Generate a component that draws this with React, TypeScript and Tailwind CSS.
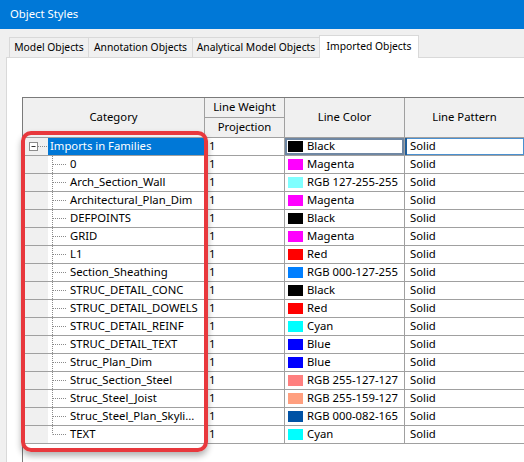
import React from 'react';

type Row = { name: string; color: string; swatch: string };

const ROWS: Row[] = [
  { name: 'Imports in Families', color: 'Black', swatch: '#000000' },
  { name: '0', color: 'Magenta', swatch: '#ff00ff' },
  { name: 'Arch_Section_Wall', color: 'RGB 127-255-255', swatch: '#7fffff' },
  { name: 'Architectural_Plan_Dim', color: 'Magenta', swatch: '#ff00ff' },
  { name: 'DEFPOINTS', color: 'Black', swatch: '#000000' },
  { name: 'GRID', color: 'Magenta', swatch: '#ff00ff' },
  { name: 'L1', color: 'Red', swatch: '#ff0000' },
  { name: 'Section_Sheathing', color: 'RGB 000-127-255', swatch: '#007fff' },
  { name: 'STRUC_DETAIL_CONC', color: 'Black', swatch: '#000000' },
  { name: 'STRUC_DETAIL_DOWELS', color: 'Red', swatch: '#ff0000' },
  { name: 'STRUC_DETAIL_REINF', color: 'Cyan', swatch: '#00ffff' },
  { name: 'STRUC_DETAIL_TEXT', color: 'Blue', swatch: '#0000ff' },
  { name: 'Struc_Plan_Dim', color: 'Blue', swatch: '#0000ff' },
  { name: 'Struc_Section_Steel', color: 'RGB 255-127-127', swatch: '#ff7f7f' },
  { name: 'Struc_Steel_Joist', color: 'RGB 255-159-127', swatch: '#ff9f7f' },
  { name: 'Struc_Steel_Plan_Skyli...', color: 'RGB 000-082-165', swatch: '#0052a5' },
  { name: 'TEXT', color: 'Cyan', swatch: '#00ffff' },
];

const TABS = [
  { label: 'Model Objects', w: 'w-[80px]' },
  { label: 'Annotation Objects', w: 'w-[105px]' },
  { label: 'Analytical Model Objects', w: 'w-[128px]' },
];

function TreeLines({ last }: { last: boolean }) {
  return (
    <svg width="20" height="17" className="shrink-0">
      <line x1="4.5" y1="0" x2="4.5" y2={last ? 8.5 : 17} stroke="#8a8a8a" strokeDasharray="1 1" />
      <line x1="5" y1="8.5" x2="19" y2="8.5" stroke="#8a8a8a" strokeDasharray="1 1" />
    </svg>
  );
}

function MinusBox() {
  return (
    <svg width="25" height="17">
      <rect x="6.5" y="4.5" width="8" height="8" fill="#ffffff" stroke="#8c8c8c" />
      <line x1="8.5" y1="8.5" x2="12.5" y2="8.5" stroke="#333333" />
      <line x1="15" y1="8.5" x2="25" y2="8.5" stroke="#8a8a8a" strokeDasharray="1 1" />
    </svg>
  );
}

export default function App() {
  return (
    <div className="relative w-[524px] h-[462px] overflow-hidden flex flex-col bg-[#f0f0f0] text-[11.3px] text-black font-['Segoe_UI','Noto_Sans',sans-serif]">
      {/* Title bar */}
      <div className="h-[29px] shrink-0 bg-[#0078d7] flex items-center pl-[10px] text-white">
        Object Styles
      </div>

      {/* Tabs */}
      <div className="h-[28px] shrink-0 flex items-end pl-[9px] whitespace-nowrap text-[10.3px]">
        {TABS.map((t) => (
          <div
            key={t.label}
            className={`${t.w} h-[20px] -mr-px flex items-center justify-center border border-b-0 border-[#d9d9d9] bg-[#f0f0f0] leading-none`}
          >
            {t.label}
          </div>
        ))}
        <div className="relative z-10 w-[100px] h-[23px] -mb-px flex items-center justify-center border border-b-0 border-[#d9d9d9] bg-white leading-none pb-[2px]">
          Imported Objects
        </div>
      </div>

      {/* Panel */}
      <div className="flex-1 ml-[6px] border-l border-t border-[#d9d9d9] bg-white pt-[39px] pl-[15px] flex flex-col">
        <div className="flex-1 border-l border-t border-[#7a7a7a]">
          {/* Header */}
          <div className="grid grid-cols-[182px_80px_120px_120px] grid-rows-[20px_20px] bg-[#f0f0f0]">
            <div className="row-span-2 border-r border-b border-[#a0a0a0] flex items-center justify-center">Category</div>
            <div className="border-r border-b border-[#a0a0a0] flex items-center justify-center">Line Weight</div>
            <div className="row-span-2 border-r border-b border-[#a0a0a0] flex items-center justify-center">Line Color</div>
            <div className="row-span-2 border-r border-b border-[#a0a0a0] flex items-center justify-center">Line Pattern</div>
            <div className="border-r border-b border-[#a0a0a0] flex items-center justify-center">Projection</div>
          </div>

          {/* Rows */}
          {ROWS.map((r, i) => {
            const first = i === 0;
            const last = i === ROWS.length - 1;
            return (
              <div key={r.name} className="grid grid-cols-[182px_80px_120px_120px] h-[18px]">
                <div className="flex border-r border-b border-[#a0a0a0] overflow-hidden whitespace-nowrap">
                  <div className="w-[25px] shrink-0 bg-[#f0f0f0]">{first && <MinusBox />}</div>
                  {first ? (
                    <div className="flex-1 bg-[#0078d7] text-white pl-[2px] flex items-center">{r.name}</div>
                  ) : (
                    <>
                      <TreeLines last={last} />
                      <div className="pl-[2px] flex items-center">{r.name}</div>
                    </>
                  )}
                </div>
                <div className="border-r border-b border-[#a0a0a0] pl-[4px] flex items-center">1</div>
                <div
                  className={`border-r border-b border-[#a0a0a0] pl-[3px] flex items-center gap-[4px] whitespace-nowrap ${
                    first ? 'shadow-[inset_0_0_0_2px_#6f87a3]' : ''
                  }`}
                >
                  <span className="w-[15px] h-[11px] shrink-0" style={{ backgroundColor: r.swatch }} />
                  <span>{r.color}</span>
                </div>
                <div
                  className={`border-r border-b border-[#a0a0a0] pl-[5px] flex items-center ${
                    first ? 'shadow-[inset_2px_0_0_#1f5d99,inset_0_0_0_1px_#4a90d0]' : ''
                  }`}
                >
                  Solid
                </div>
              </div>
            );
          })}
        </div>
      </div>

      {/* Red highlight annotation */}
      <div className="absolute left-[21px] top-[131px] w-[187px] h-[321px] rounded-[10px] border-[4px] border-[#e8383d] shadow-[0_4px_6px_rgba(0,0,0,0.3)] pointer-events-none" />
    </div>
  );
}
